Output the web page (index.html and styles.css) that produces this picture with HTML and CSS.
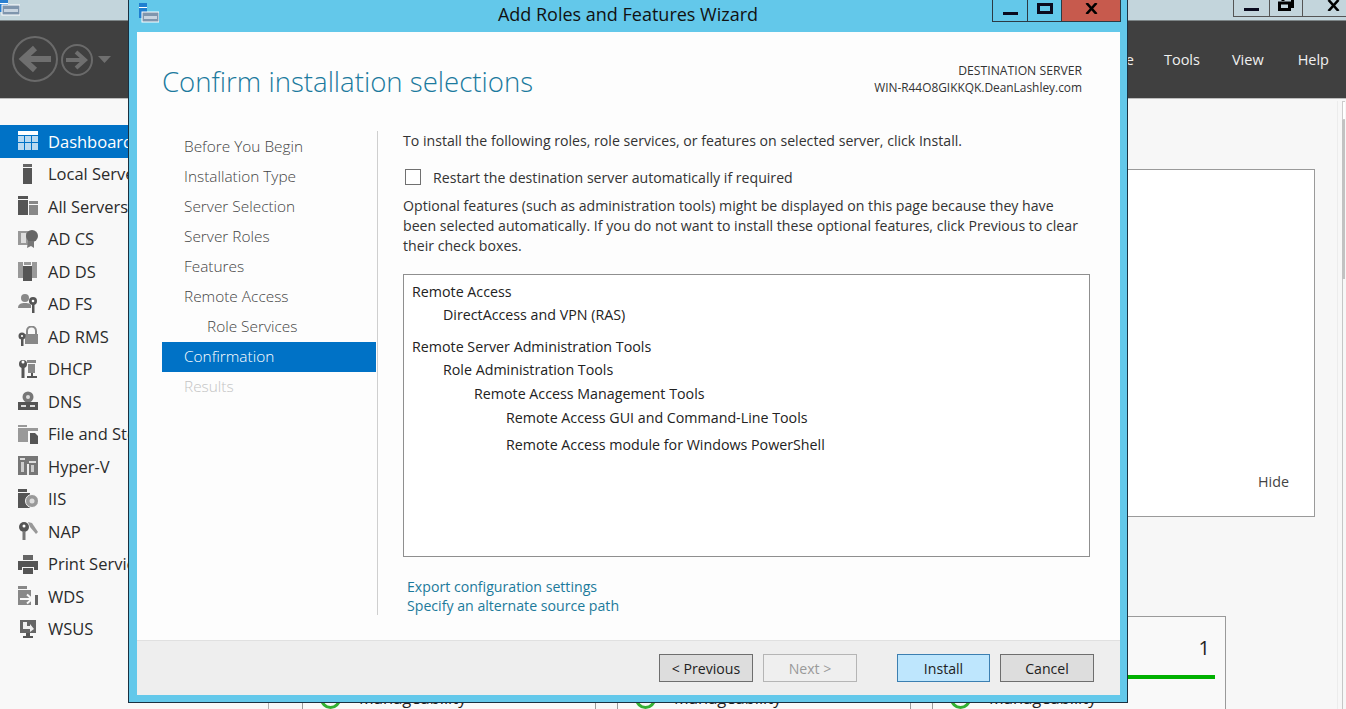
FILE: index.html
```html
<!DOCTYPE html>
<html lang="en">
<head>
<meta charset="utf-8">
<title>Server Manager - Add Roles and Features Wizard</title>
<link rel="stylesheet" href="styles.css">
</head>
<body>
<div class="sm">
  <header class="sm-title">
    <svg class="app-ico" viewBox="0 0 20 20"><rect x="0" y="-2" width="8" height="14" fill="#2a7fd0"/><rect x="0" y="3" width="8" height="1" fill="#fff"/><rect x="2" y="5" width="18" height="10" fill="#7f95ad" stroke="#fff"/><rect x="4" y="9" width="14" height="3" fill="#c8d4e0"/></svg>
    <div class="sm-btns">
      <div class="sm-btn"><span class="min-bar"></span></div>
      <div class="sm-btn"><svg class="restore" viewBox="0 0 16 11"><path d="M1.5 3v6.5h10V3zM5 1V-1M14.5-1v7.5H12" fill="none" stroke="#000" stroke-width="3"/></svg></div>
      <div class="sm-btn sm-btn-close"><svg class="x-ico" viewBox="0 0 13 11"><path d="M1.5 0l10 11M11.5 0l-10 11" stroke="#000" stroke-width="2.6"/></svg></div>
    </div>
  </header>
  <nav class="sm-toolbar">
    <svg class="back" viewBox="0 0 46 46"><circle cx="23" cy="23" r="22" fill="none" stroke="#6a6a6a" stroke-width="2"/><path d="M39 23H12M23 12L11 23l12 11" fill="none" stroke="#6f6f6f" stroke-width="6"/></svg>
    <svg class="fwd" viewBox="0 0 32 32"><circle cx="16" cy="16" r="15" fill="none" stroke="#6a6a6a" stroke-width="2"/><path d="M5 16h18M15 8l9 8-9 8" fill="none" stroke="#6f6f6f" stroke-width="4"/></svg>
    <svg class="drop" viewBox="0 0 13 7"><path d="M0 0h13L6.500 7z" fill="#6f6f6f"/></svg>
    <div class="menu">
      <span class="menu-manage">Manage</span>
      <span class="menu-tools">Tools</span>
      <span class="menu-view">View</span>
      <span class="menu-help">Help</span>
    </div>
  </nav>
  <div class="sm-main">
    <aside class="side">
      <div class="side-item side-active"><svg class="ico" viewBox="0 0 20 20"><rect y="0" width="20" height="4" fill="#fff"/><g fill="#b9d9f0"><rect y="5" width="6" height="6"/><rect x="7" y="5" width="6" height="6"/><rect x="14" y="5" width="6" height="6"/><rect y="12" width="6" height="7"/><rect x="7" y="12" width="6" height="7"/><rect x="14" y="12" width="6" height="7"/></g></svg><span>Dashboard</span></div>
      <div class="side-item"><svg class="ico" viewBox="0 0 20 20"><rect x="5" y="0" width="9" height="3" fill="#666"/><rect x="5" y="4" width="9" height="16" fill="#555"/></svg><span>Local Server</span></div>
      <div class="side-item"><svg class="ico" viewBox="0 0 20 20"><rect y="0" width="10" height="3" fill="#555"/><rect y="4" width="10" height="15" fill="#555"/><rect x="11" y="5" width="9" height="3" fill="#888"/><rect x="11" y="9" width="9" height="10" fill="#888"/></svg><span>All Servers</span></div>
      <div class="side-item"><svg class="ico" viewBox="0 0 20 20"><rect y="2" width="11" height="14" fill="#999"/><rect x="3" y="4" width="5" height="10" fill="#ddd"/><circle cx="14" cy="7" r="6" fill="#666"/><path d="M10 12l-1 7 4-2 3 2 0-7z" fill="#777"/></svg><span>AD CS</span></div>
      <div class="side-item"><svg class="ico" viewBox="0 0 20 20"><rect y="1" width="5" height="16" fill="#999"/><rect x="14" y="1" width="5" height="16" fill="#999"/><rect x="6" y="1" width="7" height="3" fill="#999"/><rect x="5" y="5" width="9" height="15" fill="#555"/></svg><span>AD DS</span></div>
      <div class="side-item"><svg class="ico" viewBox="0 0 20 20"><circle cx="7" cy="4" r="4" fill="#888"/><path d="M0 14c0-4 3-5 7-5s5 1 6 2v3z" fill="#888"/><circle cx="15" cy="7" r="4" fill="#555"/><circle cx="15" cy="7" r="1.300" fill="#fff"/><rect x="14" y="10" width="2.500" height="9" fill="#555"/></svg><span>AD FS</span></div>
      <div class="side-item"><svg class="ico" viewBox="0 0 20 20"><path d="M9 8V5a4.500 4.500 0 0 1 9 0v3" fill="none" stroke="#888" stroke-width="2"/><rect x="7" y="8" width="13" height="10" fill="#888"/><circle cx="4" cy="10" r="3.500" fill="#555"/><circle cx="4" cy="10" r="1.100" fill="#fff"/><rect x="3" y="13" width="2.500" height="7" fill="#555"/></svg><span>AD RMS</span></div>
      <div class="side-item"><svg class="ico" viewBox="0 0 20 20"><circle cx="5" cy="5" r="4" fill="#555"/><circle cx="5" cy="3" r="1.500" fill="#fff"/><rect x="3.500" y="8" width="3" height="11" fill="#555"/><rect x="9" y="1" width="9" height="3" fill="#888"/><rect x="10" y="5" width="7" height="9" fill="#888"/><rect x="13" y="14" width="2" height="3" fill="#555"/><rect x="9" y="17" width="10" height="2" fill="#555"/></svg><span>DHCP</span></div>
      <div class="side-item"><svg class="ico" viewBox="0 0 20 20"><circle cx="10" cy="6" r="5.500" fill="#777"/><circle cx="10" cy="6" r="2" fill="#ddd"/><rect y="11" width="20" height="8" fill="#555"/><rect x="3" y="14" width="5" height="2" fill="#ddd"/><rect x="12" y="14" width="5" height="2" fill="#ddd"/></svg><span>DNS</span></div>
      <div class="side-item"><svg class="ico" viewBox="0 0 20 20"><rect y="1" width="9" height="2" fill="#999"/><path d="M0 4h20v3H10v11H0z" fill="#999"/><path d="M12 9h5l3 3v8h-8z" fill="#555"/></svg><span>File and Storage Services</span></div>
      <div class="side-item"><svg class="ico" viewBox="0 0 20 20"><rect y="0" width="20" height="19" fill="#777"/><rect x="2" y="2" width="5" height="2" fill="#ddd"/><rect x="11" y="5" width="7" height="2" fill="#ddd"/><rect x="9" y="8" width="2" height="11" fill="#eee"/><rect x="13" y="9" width="3" height="7" fill="#ccc"/><rect x="3" y="6" width="3" height="10" fill="#ccc"/></svg><span>Hyper-V</span></div>
      <div class="side-item"><svg class="ico" viewBox="0 0 20 20"><rect y="0" width="9" height="3" fill="#555"/><rect y="4" width="12" height="15" fill="#555"/><circle cx="14" cy="12" r="6.500" fill="#999" stroke="#f8f8f8"/><circle cx="14" cy="12" r="2.500" fill="#ddd"/></svg><span>IIS</span></div>
      <div class="side-item"><svg class="ico" viewBox="0 0 20 20"><circle cx="6" cy="6" r="5" fill="#555"/><circle cx="6" cy="5" r="1.500" fill="#fff"/><rect x="4.500" y="10" width="3" height="9" fill="#777"/><path d="M10 1l4 1 6 9-2 2-6-7z" fill="#999"/></svg><span>NAP</span></div>
      <div class="side-item"><svg class="ico" viewBox="0 0 20 20"><rect x="5" y="1" width="10" height="5" fill="#666"/><path d="M0 7h20v9h-4v-3H4v3H0z" fill="#555"/><rect x="5" y="14" width="10" height="6" fill="#555"/></svg><span>Print Services</span></div>
      <div class="side-item"><svg class="ico" viewBox="0 0 20 20"><rect y="0" width="9" height="3" fill="#888"/><rect y="4" width="13" height="15" fill="#888"/><path d="M2 13h11M9 8.500l5 4.500-5 4.500" fill="none" stroke="#f8f8f8" stroke-width="2"/><rect x="17" y="9" width="3" height="10" fill="#666"/></svg><span>WDS</span></div>
      <div class="side-item"><svg class="ico" viewBox="0 0 20 20"><path d="M2 1h16v13H2z" fill="#666"/><path d="M5 3h4v4h3v-2l4 5-4 3v-3H5z" fill="#f0f0f0"/><rect x="8" y="14" width="4" height="3" fill="#555"/><rect x="5" y="17" width="10" height="2" fill="#555"/></svg><span>WSUS</span></div>
    </aside>
    <main class="content">
      <section class="welcome"><span class="hide">Hide</span></section>
      <section class="cards">
        <div class="card"><div class="count"><span>1</span></div><div class="bar"></div><div class="row"><span class="ok"></span><span>Manageability</span></div></div>
        <div class="card"><div class="count"><span>1</span></div><div class="bar"></div><div class="row"><span class="ok"></span><span>Manageability</span></div></div>
        <div class="card"><div class="count"><span>1</span></div><div class="bar"></div><div class="row"><span class="ok"></span><span>Manageability</span></div></div>
      </section>
    </main>
    <div class="scroll"><div class="scroll-rail"><div class="scroll-btn"></div><div class="scroll-thumb"></div></div></div>
  </div>
</div>

<div class="wizard">
  <div class="wiz-title">
    <svg class="wiz-ico" viewBox="0 0 20 20"><rect x="0" y="0" width="8" height="15" fill="#1f7fd0"/><rect x="0" y="4" width="8" height="1" fill="#fff"/><rect x="3" y="9" width="17" height="10" fill="#7f95ad" stroke="#fff"/><rect x="5" y="13" width="13" height="3" fill="#c8d4e0"/></svg>
    <span class="wiz-caption">Add Roles and Features Wizard</span>
    <div class="wiz-btns">
      <div class="wiz-btn wiz-min"><span class="min-bar"></span></div>
      <div class="wiz-btn wiz-max"><span class="max-box"></span></div>
      <div class="wiz-btn wiz-close"><svg class="x-ico" viewBox="0 0 13 11"><path d="M1.500 0l10 11M11.500 0l-10 11" stroke="#000" stroke-width="2.600"/></svg></div>
    </div>
  </div>
  <div class="wiz-client">
    <div class="wiz-head">
      <h1>Confirm installation selections</h1>
      <div class="dest"><div class="dest-label">DESTINATION SERVER</div><div class="dest-name">WIN-R44O8GIKKQK.DeanLashley.com</div></div>
    </div>
    <div class="wiz-body">
      <ul class="steps">
        <li>Before You Begin</li>
        <li>Installation Type</li>
        <li>Server Selection</li>
        <li>Server Roles</li>
        <li>Features</li>
        <li>Remote Access</li>
        <li class="step-sub">Role Services</li>
        <li class="step-on">Confirmation</li>
        <li class="step-off">Results</li>
      </ul>
      <div class="pane">
        <p class="intro">To install the following roles, role services, or features on selected server, click Install.</p>
        <label class="check"><span class="box"></span><span>Restart the destination server automatically if required</span></label>
        <p class="note">Optional features (such as administration tools) might be displayed on this page because they have been selected automatically. If you do not want to install these optional features, click Previous to clear their check boxes.</p>
        <div class="summary">
          <div class="l0">Remote Access</div>
          <div class="l1">DirectAccess and VPN (RAS)</div>
          <div class="l0 l0b">Remote Server Administration Tools</div>
          <div class="l1">Role Administration Tools</div>
          <div class="l2">Remote Access Management Tools</div>
          <div class="l3 l3a">Remote Access GUI and Command-Line Tools</div>
          <div class="l3 l3b">Remote Access module for Windows PowerShell</div>
        </div>
        <div class="links"><a>Export configuration settings</a><a>Specify an alternate source path</a></div>
      </div>
    </div>
    <div class="wiz-foot">
      <button class="btn">&lt; Previous</button>
      <button class="btn btn-off">Next &gt;</button>
      <button class="btn btn-main">Install</button>
      <button class="btn">Cancel</button>
    </div>
  </div>
</div>
</body>
</html>
```

FILE: styles.css
```css
* { box-sizing: border-box; }
html, body { margin: 0; height: 709px; overflow: hidden; }
body { font-family: "Open Sans", "Noto Sans", sans-serif; font-size: 14.130px; color: #333; background: #f7f7f7; position: relative; }

.sm { height: 709px; display: flex; flex-direction: column; overflow: hidden; }
.sm-title { height: 21px; flex: none; background: #c3d5dc; border-bottom: 1px solid #7d8587; display: flex; justify-content: space-between; }
.app-ico { width: 20px; height: 20px; }
.sm-btns { display: flex; height: 17px; }
.sm-btn { width: 36px; height: 17px; border: 1px solid #555; border-top: 0; border-right: 0; display: flex; justify-content: center; align-items: center; }
.sm-btn:nth-child(2) { width: 33px; }
.sm-btn-close { width: 44px; padding-left: 18px; }
.sm-btn .min-bar { margin-top: 2px; }
.restore { width: 16px; height: 11px; margin-top: -6px; }
.min-bar { display: block; width: 15px; height: 3px; background: #0a0a1e; }
.x-ico { width: 13px; height: 11px; }
.sm-btn-close .x-ico { margin-top: -6px; }

.sm-toolbar { height: 78px; flex: none; background: #404040; border-bottom: 1px solid #bdbdbd; display: flex; align-items: center; padding-left: 12px; }
.back { width: 46px; height: 46px; margin-top: -1px; }
.fwd { width: 32px; height: 32px; margin-left: 3px; }
.drop { width: 13px; height: 7px; margin-left: 5px; }
.menu { margin-left: auto; display: flex; color: #f0f0f0; font-size: 14.500px; }
.menu-manage { margin-right: 30px; }
.menu-tools { margin-right: 32px; }
.menu-view { margin-right: 34px; }
.menu-help { margin-right: 17px; }

.sm-main { flex: 1; display: flex; min-height: 0; }
.side { width: 269px; flex: none; background: #f8f8f8; border-right: 1px solid #b0b0b0; padding-top: 26px; }
.side-item { height: 32.500px; display: flex; align-items: center; padding-left: 18px; gap: 10px; font-size: 16.500px; color: #2b2b2b; white-space: nowrap; }
.side-active { background: #0072c6; color: #fff; }
.ico { width: 20px; height: 20px; flex: none; }

.content { flex: 1; min-width: 0; padding: 70px 22px 0 33px; }
.welcome { height: 348px; background: #fff; border: 1px solid #9a9a9a; position: relative; display: flex; justify-content: flex-end; align-items: flex-end; padding: 0 25px 25px 0; }
.hide { font-size: 14.300px; color: #444; }
.cards { display: flex; gap: 21px; margin-top: 99px; width: 924px; }
.card { flex: 1; height: 120px; background: #f9f9f9; border: 1px solid #9a9a9a; padding: 18px 10px 0 0; }
.count { text-align: right; font-size: 20px; line-height: 25px; padding-right: 5px; color: #222; }
.bar { height: 4px; background: #00b000; margin: 15px 0 0 0; }
.row { display: flex; align-items: center; gap: 18px; font-size: 16.500px; margin: 8px 0 0 17px; line-height: 22px; color: #222; }
.ok { width: 21px; height: 21px; border: 3px solid #34b034; border-radius: 50%; flex: none; }

.scroll { width: 9px; flex: none; margin-top: 2px; border-left: 1px solid #ececec; display: flex; justify-content: flex-end; }
.scroll-rail { width: 3px; border-left: 1px solid #c6c6c6; box-sizing: content-box; }
.scroll-btn { width: 3px; height: 19px; background: #fff; margin-left: -1px; border: 1px solid #ccc; border-right: 0; }
.scroll-thumb { width: 3px; height: 159px; background: #c2c2c2; margin-left: -1px; }

.wizard { position: absolute; left: 128px; top: -1px; width: 1000px; height: 704px; background: #63c8ea; border: 1px solid #1a3040; display: flex; flex-direction: column; }
.wiz-title { height: 32px; flex: none; position: relative; display: flex; justify-content: center; }
.wiz-ico { position: absolute; left: 10px; top: 3px; width: 20px; height: 20px; }
.wiz-caption { font-size: 18px; line-height: 28px; color: #111; }
.wiz-btns { position: absolute; right: 6px; top: 0; display: flex; height: 22px; border: 1px solid #2b3a44; border-top: 0; }
.wiz-btn { display: flex; align-items: center; justify-content: center; }
.wiz-min { width: 35px; border-right: 1px solid #2b3a44; }
.wiz-min .min-bar { margin-top: 6px; }
.wiz-max { width: 34px; border-right: 1px solid #2b3a44; }
.max-box { width: 16px; height: 11px; border: 3px solid #0a0a1e; margin-top: -4px; }
.wiz-close { width: 58px; background: #c75a4d; }
.wiz-close .x-ico { margin-top: -4px; }

.wiz-client { margin: 0 7px 7px 8px; flex: 1; background: #fdfdfd; display: flex; flex-direction: column; min-height: 0; }
.wiz-head { height: 99px; flex: none; display: flex; justify-content: space-between; padding: 30px 38px 0 25px; }
h1 { margin: 0; font-size: 27.600px; font-weight: 300; color: #1b7a9e; line-height: 38px; }
.dest { text-align: right; line-height: 17px; color: #333; }
.dest-label { font-size: 12.200px; }
.dest-name { font-size: 11.900px; }

.wiz-body { flex: 1; display: flex; min-height: 0; padding-left: 25px; }
.steps { list-style: none; margin: 1px 0 0 0; padding: 0; width: 214px; flex: none; font-size: 15.400px; font-weight: 300; color: #444; }
.steps li { height: 30px; line-height: 29px; padding-left: 22px; }
.steps .step-sub { padding-left: 45px; }
.steps .step-on { background: #0072c6; color: #fff; }
.steps .step-off { color: #c4c4c4; }

.pane { margin: 0 30px 25px 1px; padding: 0 0 0 25px; border-left: 1px solid #cfcfcf; flex: 1; min-width: 0; }
.intro { margin: 0; line-height: 20px; }
.check { display: flex; align-items: center; gap: 12px; margin: 16px 0 0 2px; height: 20px; }
.box { width: 16px; height: 16px; border: 1px solid #707070; background: #fff; }
.note { margin: 9px 0 0; line-height: 20px; max-width: 682px; }
.summary { margin-top: 18px; height: 283px; border: 1px solid #8f8f8f; background: #fff; padding: 5px 8px; font-size: 14.250px; }
.summary div { line-height: 23.300px; color: #222; }
.summary .l1 { padding-left: 31px; }
.summary .l2 { padding-left: 62px; margin-top: 0.500px; }
.summary .l3 { padding-left: 94px; }
.summary .l0b { margin-top: 8.500px; }
.summary .l3a { margin-top: 1px; }
.summary .l3b { margin-top: 3.600px; }
.links { display: flex; flex-direction: column; align-items: flex-start; margin: 20px 0 0 4px; line-height: 19px; color: #1c7a9b; font-size: 14.150px; }

.wiz-foot { height: 55px; flex: none; background: #eee; border-top: 1px solid #e0e0e0; display: flex; align-items: flex-start; padding: 13px 26px 0 0; justify-content: flex-end; }
.btn { width: 94px; height: 28px; font: inherit; color: #222; background: #ddd; border: 1px solid #6e6e6e; padding: 0; }
.btn-off { margin-left: 10px; background: #efefef; border-color: #b5b5b5; color: #9a9a9a; }
.btn-main { width: 93px; margin-left: 40px; background: #bee6fd; border-color: #3c7fb1; }
.btn-main + .btn { margin-left: 10px; }
```
